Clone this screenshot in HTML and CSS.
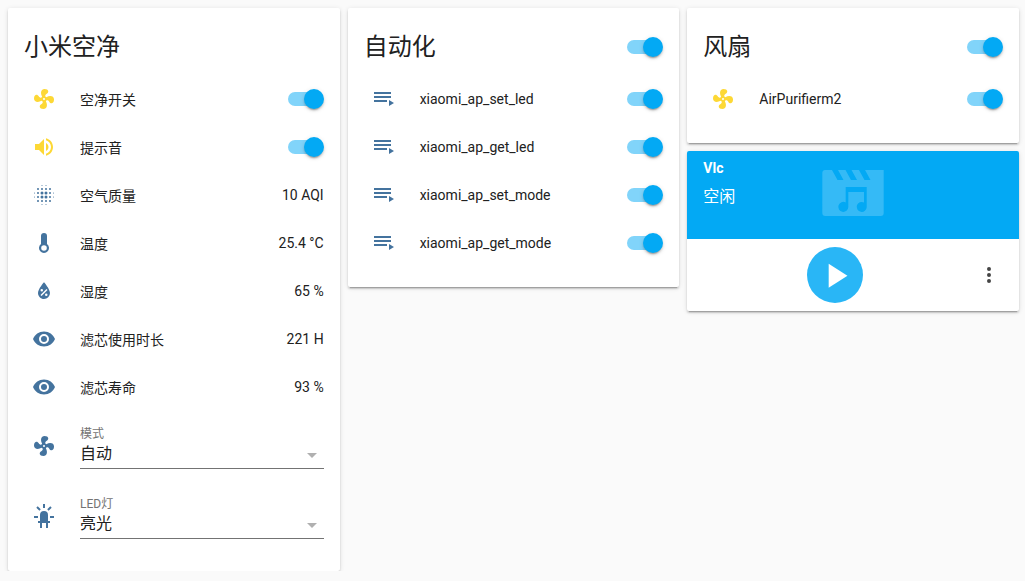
FILE: index.html
```html
<!DOCTYPE html>
<html lang="zh">
<head>
<meta charset="utf-8">
<title>小米空净</title>
<link rel="stylesheet" href="styles.css">
</head>
<body>
<svg class="sprite" aria-hidden="true">
  <symbol id="fan" viewBox="0 0 24 24"><path d="M12,11A1,1 0 0,0 11,12A1,1 0 0,0 12,13A1,1 0 0,0 13,12A1,1 0 0,0 12,11M12.5,2C17,2 17.11,5.57 14.75,6.75C13.76,7.24 13.32,8.29 13.13,9.22C13.61,9.42 14.03,9.73 14.35,10.13C18.05,8.13 22.03,8.92 22.03,12.5C22.03,17 18.46,17.1 17.28,14.73C16.78,13.74 15.72,13.3 14.79,13.11C14.59,13.59 14.28,14 13.88,14.34C15.87,18.03 15.08,22 11.5,22C7,22 6.91,18.42 9.27,17.24C10.25,16.75 10.69,15.71 10.89,14.79C10.4,14.59 9.97,14.27 9.65,13.87C5.96,15.85 2,15.07 2,11.5C2,7 5.56,6.89 6.74,9.26C7.24,10.25 8.29,10.68 9.22,10.87C9.41,10.39 9.73,9.97 10.14,9.65C8.15,5.96 8.94,2 12.5,2Z"/></symbol>
  <symbol id="volume" viewBox="0 0 24 24"><path d="M14,3.23V5.29C16.89,6.15 19,8.83 19,12C19,15.17 16.89,17.84 14,18.7V20.77C18,19.86 21,16.28 21,12C21,7.72 18,4.14 14,3.23M16.5,12C16.5,10.23 15.5,8.71 14,7.97V16C15.5,15.29 16.5,13.76 16.5,12M3,9V15H7L12,20V4L7,9H3Z"/></symbol>
  <symbol id="blur" viewBox="0 0 24 24">
    <g>
      <circle cx="6" cy="6" r="1"/><circle cx="10" cy="6" r="1"/><circle cx="14" cy="6" r="1"/><circle cx="18" cy="6" r="1"/>
      <circle cx="6" cy="10" r="1"/><circle cx="10" cy="10" r="1.5"/><circle cx="14" cy="10" r="1.5"/><circle cx="18" cy="10" r="1"/>
      <circle cx="6" cy="14" r="1"/><circle cx="10" cy="14" r="1.5"/><circle cx="14" cy="14" r="1.5"/><circle cx="18" cy="14" r="1"/>
      <circle cx="6" cy="18" r="1"/><circle cx="10" cy="18" r="1"/><circle cx="14" cy="18" r="1"/><circle cx="18" cy="18" r="1"/>
      <circle cx="10" cy="2.5" r=".5"/><circle cx="14" cy="2.5" r=".5"/><circle cx="10" cy="21.5" r=".5"/><circle cx="14" cy="21.5" r=".5"/>
      <circle cx="2.5" cy="10" r=".5"/><circle cx="2.5" cy="14" r=".5"/><circle cx="21.5" cy="10" r=".5"/><circle cx="21.5" cy="14" r=".5"/>
    </g>
  </symbol>
  <symbol id="thermo" viewBox="0 0 24 24"><path fill-rule="evenodd" d="M15,13V5A3,3 0 0,0 9,5V13A5,5 0 1,0 15,13ZM12,14.2A2.8,2.8 0 1,1 12,19.8A2.8,2.8 0 1,1 12,14.2Z"/></symbol>
  <symbol id="water" viewBox="0 0 24 24"><path d="M12,3.25C12,3.25 6,10 6,14C6,17.32 8.69,20 12,20A6,6 0 0,0 18,14C18,10 12,3.25 12,3.25M14.47,9.97L15.53,11.03L9.53,17.03L8.47,15.97M9.75,10A1.25,1.25 0 0,1 11,11.25A1.25,1.25 0 0,1 9.75,12.5A1.25,1.25 0 0,1 8.5,11.25A1.25,1.25 0 0,1 9.75,10M14.25,14.5A1.25,1.25 0 0,1 15.5,15.75A1.25,1.25 0 0,1 14.25,17A1.25,1.25 0 0,1 13,15.75A1.25,1.25 0 0,1 14.25,14.5Z"/></symbol>
  <symbol id="eye" viewBox="0 0 24 24"><path d="M12,9A3,3 0 0,0 9,12A3,3 0 0,0 12,15A3,3 0 0,0 15,12A3,3 0 0,0 12,9M12,17A5,5 0 0,1 7,12A5,5 0 0,1 12,7A5,5 0 0,1 17,12A5,5 0 0,1 12,17M12,4.5C7,4.5 2.73,7.61 1,12C2.73,16.39 7,19.5 12,19.5C17,19.5 21.27,16.39 23,12C21.27,7.61 17,4.5 12,4.5Z"/></symbol>
  <symbol id="led" viewBox="0 0 24 24"><path d="M11,0V4H13V0H11M18.3,2.29L15.24,5.29L16.64,6.71L19.7,3.71L18.3,2.29M5.7,2.29L4.3,3.71L7.36,6.71L8.76,5.29L5.7,2.29M2,12V14H6V12H2M18,12V14H22V12H18M12,7A4,4 0 0,0 8,11V17H6V19H8V24H10V19H14V24H16V19H18V17H16V11A4,4 0 0,0 12,7Z"/></symbol>
  <symbol id="playlist" viewBox="0 0 24 24"><path d="M19,9H2V11H19V9M19,5H2V7H19V5M2,15H15V13H2V15M17,13V19L22,16L17,13Z"/></symbol>
  <symbol id="dots" viewBox="0 0 24 24"><path d="M12,16A2,2 0 0,1 14,18A2,2 0 0,1 12,20A2,2 0 0,1 10,18A2,2 0 0,1 12,16M12,10A2,2 0 0,1 14,12A2,2 0 0,1 12,14A2,2 0 0,1 10,12A2,2 0 0,1 12,10M12,4A2,2 0 0,1 14,6A2,2 0 0,1 12,8A2,2 0 0,1 10,6A2,2 0 0,1 12,4Z"/></symbol>
  <symbol id="play" viewBox="0 0 24 24"><path d="M8,5.14V19.14L19,12.14L8,5.14Z"/></symbol>
</svg>

<main class="board">
  <section class="card card-tall">
    <header class="card-header"><h1 class="card-title">小米空净</h1></header>
    <div class="row"><svg class="icon icon-on"><use href="#fan"/></svg><span class="label">空净开关</span><span class="toggle"></span></div>
    <div class="row"><svg class="icon icon-on"><use href="#volume"/></svg><span class="label">提示音</span><span class="toggle"></span></div>
    <div class="row"><svg class="icon"><use href="#blur"/></svg><span class="label">空气质量</span><span class="value">10 AQI</span></div>
    <div class="row"><svg class="icon"><use href="#thermo"/></svg><span class="label">温度</span><span class="value">25.4 °C</span></div>
    <div class="row"><svg class="icon"><use href="#water"/></svg><span class="label">湿度</span><span class="value">65 %</span></div>
    <div class="row"><svg class="icon"><use href="#eye"/></svg><span class="label">滤芯使用时长</span><span class="value">221 H</span></div>
    <div class="row"><svg class="icon"><use href="#eye"/></svg><span class="label">滤芯寿命</span><span class="value">93 %</span></div>
    <div class="row row-select">
      <svg class="icon"><use href="#fan"/></svg>
      <div class="field">
        <div class="field-label">模式</div>
        <div class="field-value"><span>自动</span><span class="caret"></span></div>
      </div>
    </div>
    <div class="row row-select">
      <svg class="icon"><use href="#led"/></svg>
      <div class="field">
        <div class="field-label">LED灯</div>
        <div class="field-value"><span>亮光</span><span class="caret"></span></div>
      </div>
    </div>
  </section>

  <section class="card">
    <header class="card-header"><h1 class="card-title">自动化</h1><span class="toggle"></span></header>
    <div class="row"><svg class="icon"><use href="#playlist"/></svg><span class="label">xiaomi_ap_set_led</span><span class="toggle"></span></div>
    <div class="row"><svg class="icon"><use href="#playlist"/></svg><span class="label">xiaomi_ap_get_led</span><span class="toggle"></span></div>
    <div class="row"><svg class="icon"><use href="#playlist"/></svg><span class="label">xiaomi_ap_set_mode</span><span class="toggle"></span></div>
    <div class="row"><svg class="icon"><use href="#playlist"/></svg><span class="label">xiaomi_ap_get_mode</span><span class="toggle"></span></div>
  </section>

  <div class="stack">
    <section class="card">
      <header class="card-header"><h1 class="card-title">风扇</h1><span class="toggle"></span></header>
      <div class="row"><svg class="icon icon-on"><use href="#fan"/></svg><span class="label">AirPurifierm2</span><span class="toggle"></span></div>
    </section>
    <section class="card media">
      <div class="media-top">
        <div class="media-name">Vlc</div>
        <div class="media-state">空闲</div>
        <svg class="media-art" viewBox="0 0 76 64">
          <path fill-rule="evenodd" d="M10,8H17L22.5,18H28.5L23,8H30.5L36,18H42L36.5,8H44L49.5,18H55.5L50,8H68.7V51A3,3 0 0,1 65.7,54H10.3A3,3 0 0,1 7.3,51V11A3,3 0 0,1 10,8ZM30.7,25V40.5A5,5 0 1,0 33.3,45V30H49V40.5A5,5 0 1,0 51.7,45V25Z"/>
        </svg>
      </div>
      <div class="media-controls">
        <span></span>
        <button class="play" type="button" aria-label="play"><svg class="play-icon"><use href="#play"/></svg></button>
        <svg class="icon icon-dots"><use href="#dots"/></svg>
      </div>
    </section>
  </div>
</main>
</body>
</html>
```

FILE: styles.css
```css
* {
  box-sizing: border-box;
}

html,
body {
  margin: 0;
  background: #fafafa;
}

body {
  padding: 8px 6px 0 8px;
  font-family: Roboto, "Noto Sans CJK SC", sans-serif;
  font-size: 14px;
  color: #212121;
}

.sprite {
  display: none;
}

.board {
  display: grid;
  grid-template-columns: repeat(3, 1fr);
  column-gap: 8px;
  align-items: start;
}

.stack {
  display: flex;
  flex-direction: column;
  gap: 8px;
}

.card {
  background: #fff;
  border-radius: 2px;
  padding: 0 16px 20px;
  box-shadow: 0 2px 2px rgba(0, 0, 0, .14), 0 1px 5px rgba(0, 0, 0, .12), 0 3px 1px -2px rgba(0, 0, 0, .2);
}

.card-header {
  display: flex;
  align-items: center;
  justify-content: space-between;
  padding: 23px 0 12px;
}

.card-title {
  margin: 0;
  font-size: 24px;
  font-weight: 400;
  line-height: 32px;
  color: #212121;
}

.row {
  display: flex;
  align-items: center;
  height: 48px;
  padding-left: 8px;
}

.icon {
  flex: none;
  width: 24px;
  height: 24px;
  fill: #44739e;
}

.icon-on {
  fill: #fdd835;
}

.label {
  flex: 1;
  margin-left: 24px;
  white-space: nowrap;
}

.value {
  white-space: nowrap;
}

.toggle {
  position: relative;
  flex: none;
  width: 34px;
  height: 14px;
  margin-right: 2px;
  border-radius: 7px;
  background: #81d4fa;
}

.toggle::after {
  content: "";
  position: absolute;
  top: -3px;
  right: -2px;
  width: 20px;
  height: 20px;
  border-radius: 50%;
  background: #03a9f4;
  box-shadow: 0 2px 2px rgba(0, 0, 0, .14), 0 1px 5px rgba(0, 0, 0, .12), 0 3px 1px -2px rgba(0, 0, 0, .2);
}

.row-select {
  height: 70px;
}

.field {
  flex: 1;
  margin-left: 24px;
  border-bottom: 1px solid #737373;
  margin-top: 2px;
}

.field-label {
  font-size: 12px;
  line-height: 16px;
  color: #737373;
}

.field-value {
  display: flex;
  align-items: center;
  justify-content: space-between;
  height: 26px;
  padding-bottom: 2px;
  font-size: 16px;
  line-height: 24px;
}

.caret {
  width: 0;
  height: 0;
  margin: 3px 7px 0 0;
  border-style: solid;
  border-width: 5px 5px 0;
  border-color: #b0b0b0 transparent transparent;
}

.media {
  padding: 0;
  overflow: hidden;
}

.media-top {
  position: relative;
  height: 88px;
  padding: 7px 16px 0;
  background: #03a9f4;
  color: #fff;
}

.media-name {
  font-weight: 700;
  line-height: 20px;
}

.media-state {
  margin-top: 7px;
  font-size: 16px;
  line-height: 24px;
}

.media-art {
  position: absolute;
  top: 11px;
  left: 128px;
  width: 76px;
  height: 64px;
  fill: rgba(255, 255, 255, .2);
}

.media-controls {
  display: grid;
  grid-template-columns: 1fr auto 1fr;
  align-items: center;
  height: 72px;
  padding-right: 18px;
}

.icon-dots {
  justify-self: end;
  fill: #444;
}

.play {
  display: flex;
  align-items: center;
  justify-content: center;
  width: 56px;
  height: 56px;
  padding: 0;
  border: 0;
  border-radius: 50%;
  background: #29b6f6;
  transform: translateX(-9px);
}

.play-icon {
  width: 41px;
  height: 41px;
  fill: #fff;
}
```
